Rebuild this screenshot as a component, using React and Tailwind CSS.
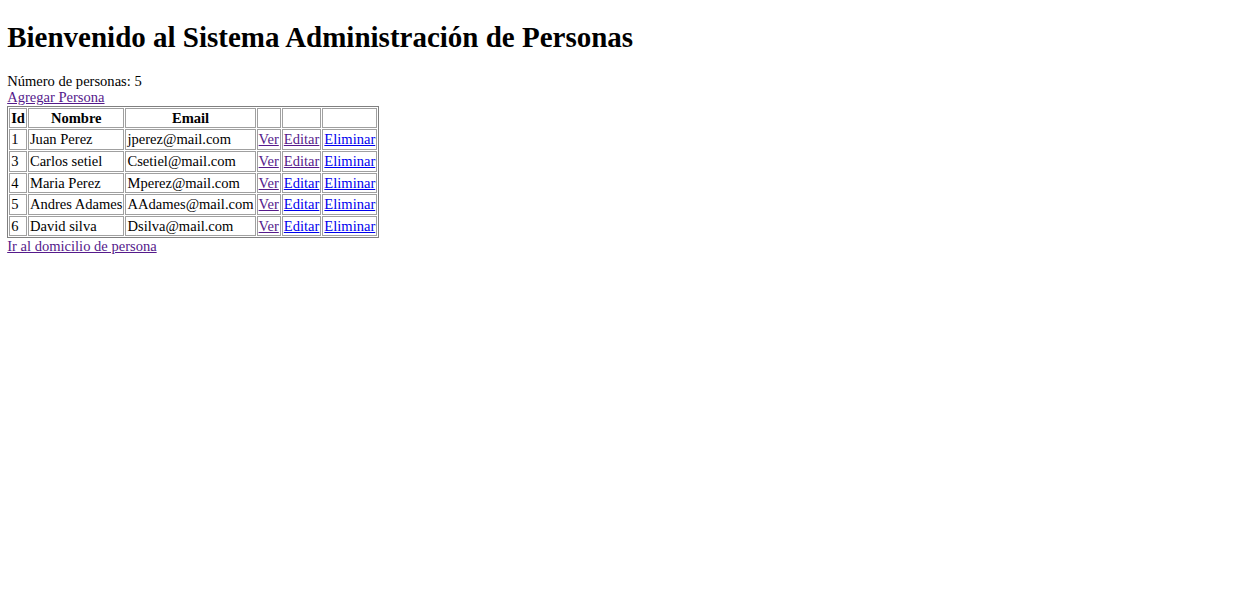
export default function App() {
  const rows = [
    { id: 1, nombre: "Juan Perez", email: "jperez@mail.com", ev: true },
    { id: 3, nombre: "Carlos setiel", email: "Csetiel@mail.com", ev: true },
    { id: 4, nombre: "Maria Perez", email: "Mperez@mail.com", ev: false },
    { id: 5, nombre: "Andres Adames", email: "AAdames@mail.com", ev: false },
    { id: 6, nombre: "David silva", email: "Dsilva@mail.com", ev: false },
  ];
  const td = "border border-[#a0a0a0] border-solid p-[1px] whitespace-nowrap";
  const th = "border border-[#a0a0a0] border-solid p-[1px] font-bold text-center whitespace-nowrap";
  return (
    <div className="bg-white min-h-[593px] px-[7.2px] pb-[7.2px] pt-0 text-black text-[14.55px] leading-[1.14]" style={{ fontFamily: '"Liberation Serif", "Times New Roman", serif' }}>
      <h1 className="text-[29px] font-bold mt-[20.5px] mb-[18.8px] leading-[1.15]">Bienvenido al Sistema Administración de Personas</h1>
      <div>Número de personas: 5</div>
      <div><a href="#" className="underline text-[#551a8b]">Agregar Persona</a></div>
      <table className="border-separate border-spacing-[1.8px] border border-solid border-[#808080]">
        <thead>
          <tr>
            <th className={th}>Id</th>
            <th className={th}>Nombre</th>
            <th className={th}>Email</th>
            <th className={th}></th>
            <th className={th}></th>
            <th className={th}></th>
          </tr>
        </thead>
        <tbody>
          {rows.map((r) => (
            <tr key={r.id}>
              <td className={td}>{r.id}</td>
              <td className={td}>{r.nombre}</td>
              <td className={td}>{r.email}</td>
              <td className={td}><a href="#" className="underline text-[#551a8b]">Ver</a></td>
              <td className={td}><a href="#" className={r.ev ? "underline text-[#551a8b]" : "underline text-[#0000ee]"}>Editar</a></td>
              <td className={td}><a href="#" className="underline text-[#0000ee]">Eliminar</a></td>
            </tr>
          ))}
        </tbody>
      </table>
      <div><a href="#" className="underline text-[#551a8b]">Ir al domicilio de persona</a></div>
    </div>
  );
}
